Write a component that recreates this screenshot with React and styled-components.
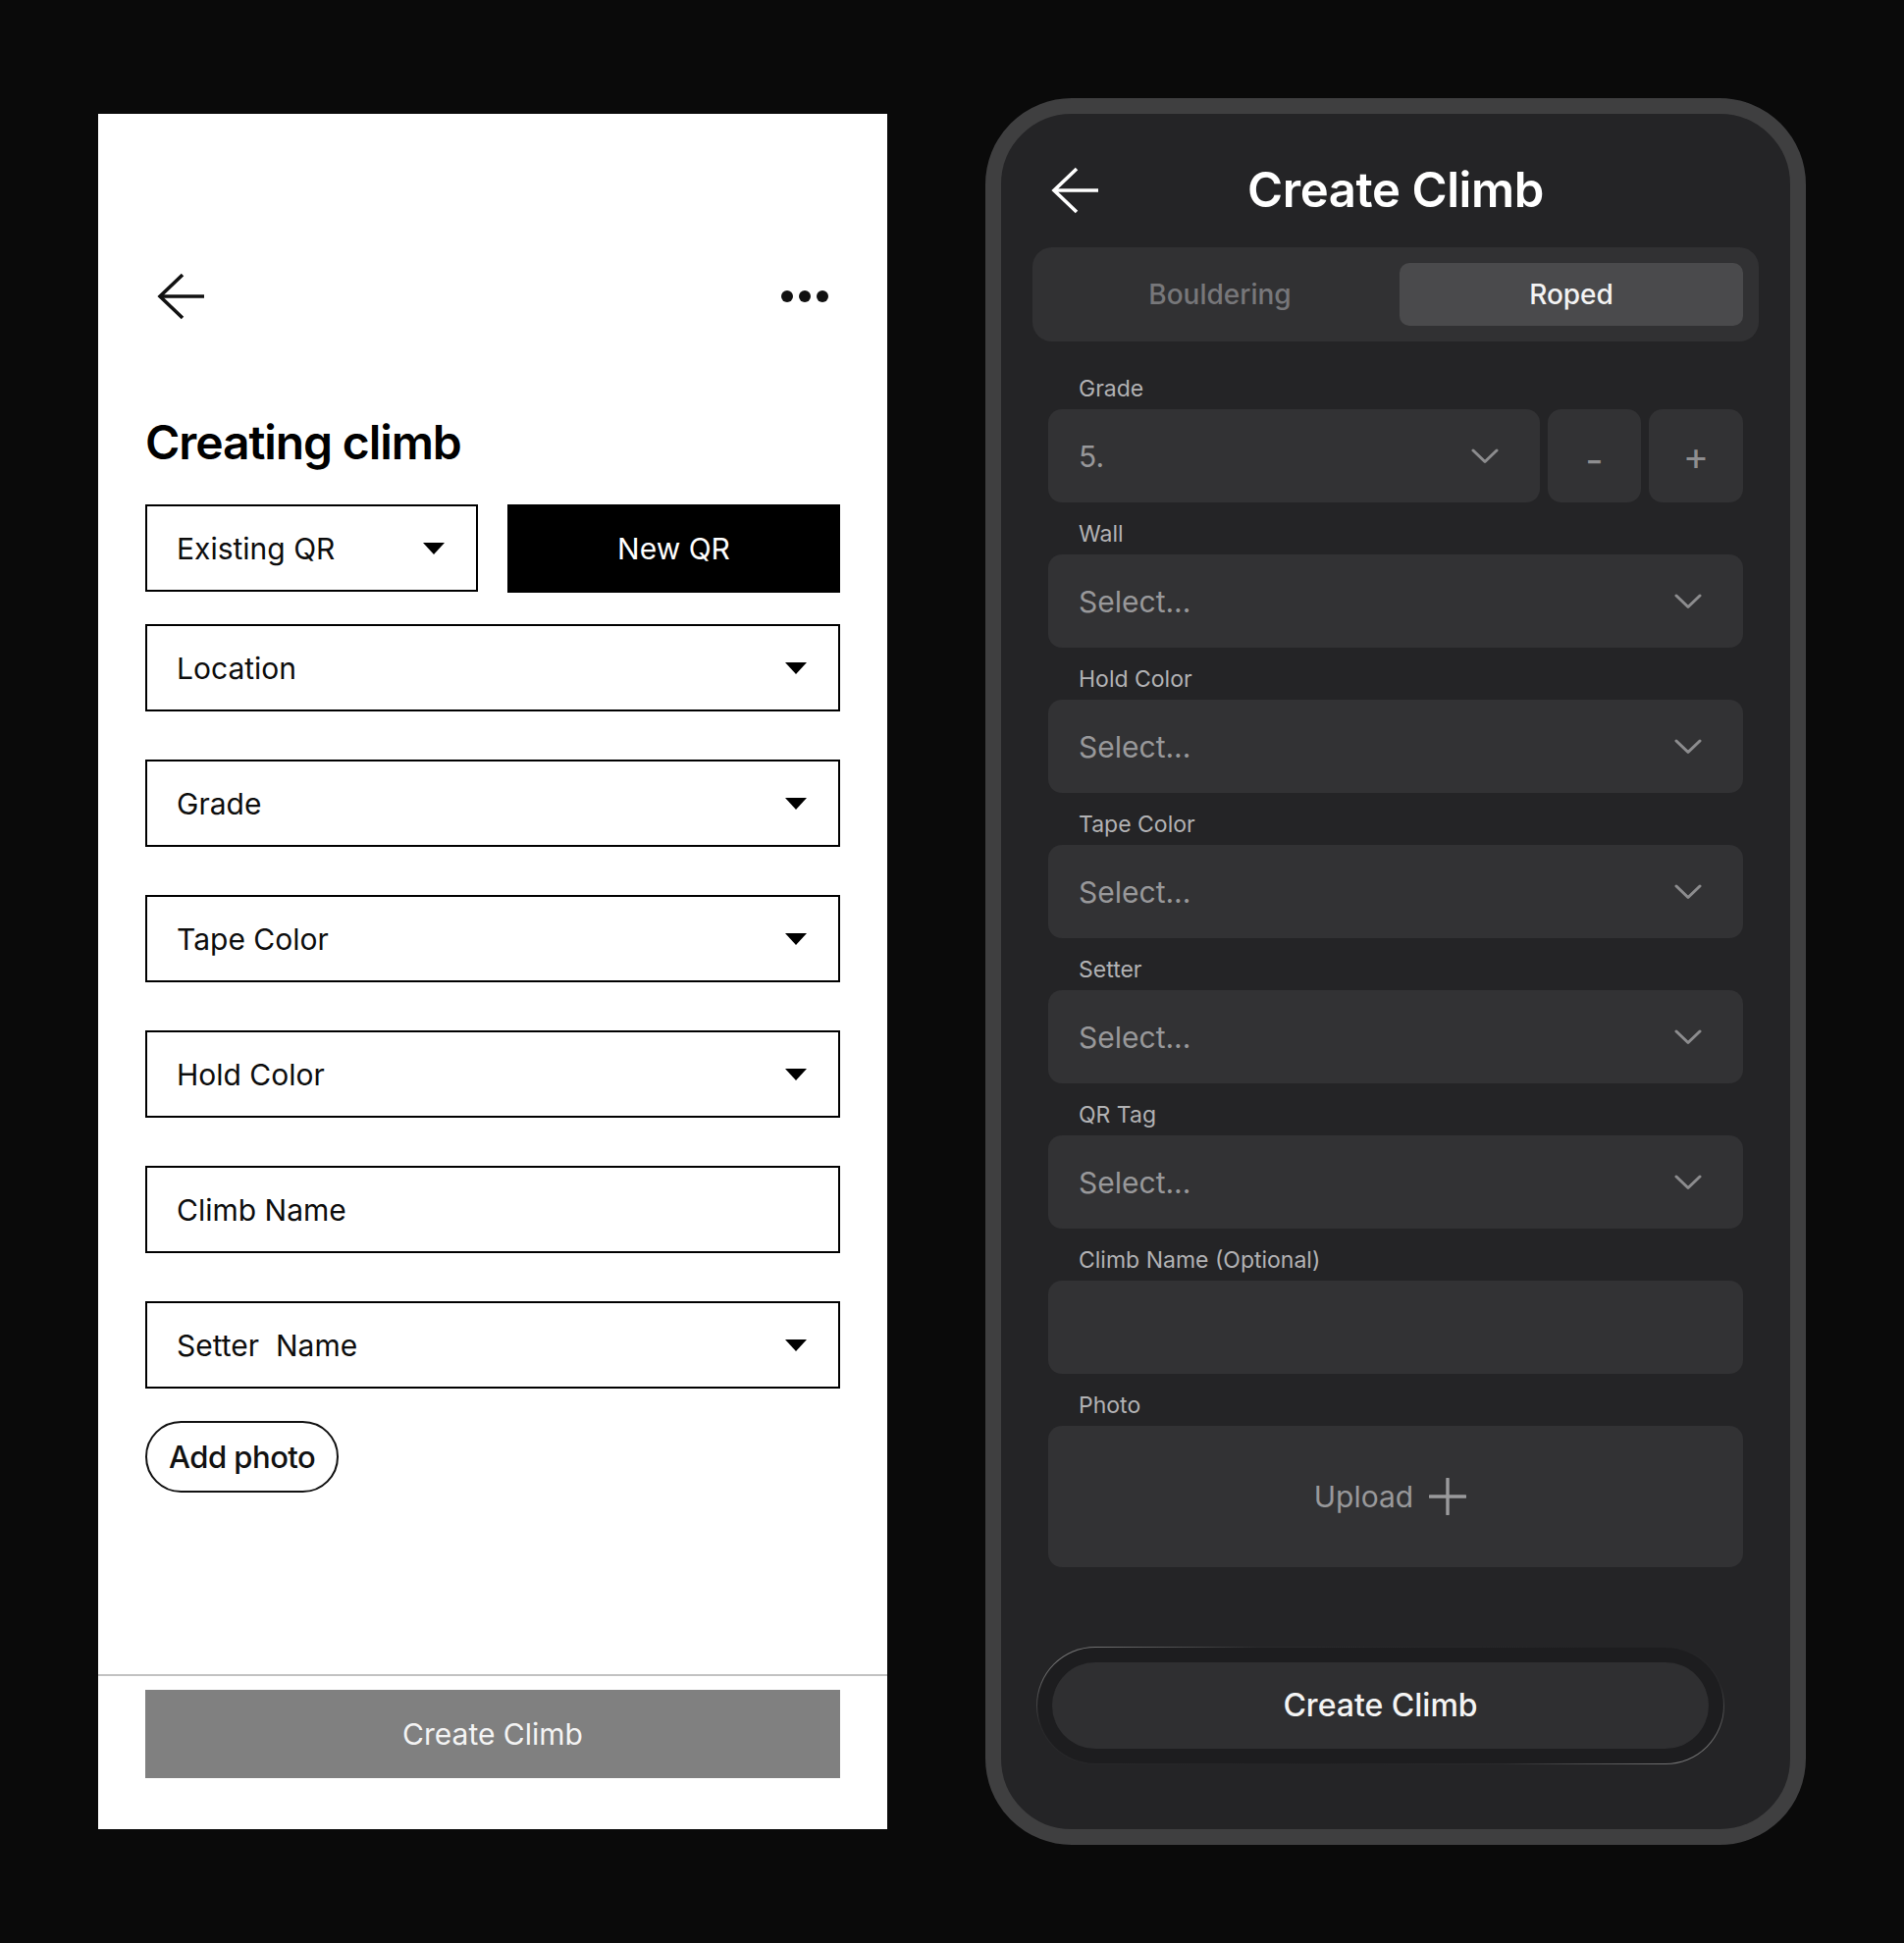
import React from "react";
import styled, { createGlobalStyle } from "styled-components";

const GlobalStyle = createGlobalStyle`
  * { box-sizing: border-box; }
  html, body { margin: 0; padding: 0; }
  body {
    background: #0a0a0a;
    font-family: Inter, "Noto Sans", "Liberation Sans", sans-serif;
  }
`;

const Canvas = styled.div`
  display: flex;
  align-items: flex-start;
  gap: 100px;
  padding: 100px 0 0 100px;
  min-height: 1980px;
  width: 1940px;
`;

/* ---------- Left wireframe ---------- */

const WirePanel = styled.section`
  width: 804px;
  height: 1748px;
  margin-top: 16px;
  background: #ffffff;
  display: flex;
  flex-direction: column;
`;

const WireBody = styled.div`
  padding: 162px 48px 0;
`;

const WireTopBar = styled.div`
  display: flex;
  justify-content: space-between;
  align-items: center;
  height: 48px;
  padding: 0 12px;
`;

const WireTitle = styled.h1`
  margin: 96px 0 0;
  font: 600 48px/58px Inter, sans-serif;
  letter-spacing: -1.1px;
  color: #000;
`;

const QrRow = styled.div`
  display: grid;
  grid-template-columns: 1fr 1fr;
  gap: 30px;
  margin-top: 34px;
`;

const WireSelect = styled.div`
  height: 89px;
  border: 2px solid #000;
  display: flex;
  align-items: center;
  justify-content: space-between;
  padding: 0 32px 0 30px;
  font: 400 30px/1 Inter, sans-serif;
  color: #0d0d0d;
  white-space: pre;
`;

const NewQrButton = styled.div`
  height: 90px;
  background: #000;
  color: #fff;
  display: flex;
  align-items: center;
  justify-content: center;
  font: 400 30px/1 Inter, sans-serif;
`;

const FieldStack = styled.div`
  display: flex;
  flex-direction: column;
  gap: 49px;
  margin-top: 32px;
`;

const AddPhoto = styled.div`
  margin-top: 33px;
  width: fit-content;
  height: 73px;
  padding: 0 22px;
  border: 2px solid #111;
  border-radius: 999px;
  display: flex;
  align-items: center;
  font: 500 31px/1 Inter, sans-serif;
  letter-spacing: -0.5px;
  color: #111;
`;

const WireFooter = styled.div`
  margin-top: auto;
  border-top: 2px solid #c2c2c2;
  padding: 14px 48px 52px;
`;

const GrayButton = styled.div`
  height: 90px;
  background: #808080;
  color: #f4f4f4;
  display: flex;
  align-items: center;
  justify-content: center;
  font: 400 30px/1 Inter, sans-serif;
`;

const Triangle = () => (
  <svg width="22" height="12" viewBox="0 0 22 12" aria-hidden="true">
    <polygon points="0,0 22,0 11,12" fill="#000" />
  </svg>
);

const BackArrow = ({ color }) => (
  <svg width="48" height="48" viewBox="0 0 48 48" fill="none" aria-hidden="true">
    <path d="M26 2 L3 24 L26 46" stroke={color} strokeWidth="3.6" />
    <path d="M3 24 H48" stroke={color} strokeWidth="3.6" />
  </svg>
);

const Dots = () => (
  <svg width="48" height="14" viewBox="0 0 48 14" aria-hidden="true">
    <circle cx="6" cy="7" r="6" fill="#111" />
    <circle cx="24" cy="7" r="6" fill="#111" />
    <circle cx="42" cy="7" r="6" fill="#111" />
  </svg>
);

const wireFields = [
  { label: "Location", drop: true },
  { label: "Grade", drop: true },
  { label: "Tape Color", drop: true },
  { label: "Hold Color", drop: true },
  { label: "Climb Name", drop: false },
  { label: "Setter  Name", drop: true },
];

const Wireframe = () => (
  <WirePanel>
    <WireBody>
      <WireTopBar>
        <BackArrow color="#111" />
        <Dots />
      </WireTopBar>
      <WireTitle>Creating climb</WireTitle>
      <QrRow>
        <WireSelect>
          <span>Existing QR</span>
          <Triangle />
        </WireSelect>
        <NewQrButton>New QR</NewQrButton>
      </QrRow>
      <FieldStack>
        {wireFields.map((f) => (
          <WireSelect key={f.label}>
            <span>{f.label}</span>
            {f.drop && <Triangle />}
          </WireSelect>
        ))}
      </FieldStack>
      <AddPhoto>Add photo</AddPhoto>
    </WireBody>
    <WireFooter>
      <GrayButton>Create Climb</GrayButton>
    </WireFooter>
  </WirePanel>
);

/* ---------- Right phone ---------- */

const PhoneFrame = styled.section`
  width: 836px;
  height: 1780px;
  border: 16px solid #3f3f40;
  border-radius: 88px;
  background: #242426;
  display: flex;
  flex-direction: column;
  overflow: hidden;
`;

const PhoneHeader = styled.header`
  display: grid;
  grid-template-columns: 1fr auto 1fr;
  align-items: center;
  height: 58px;
  margin-top: 49px;
  padding: 0 51px;
`;

const PhoneTitle = styled.h1`
  margin: 0;
  font: 600 49px/58px Inter, sans-serif;
  letter-spacing: -0.4px;
  color: #ffffff;
`;

const Segmented = styled.div`
  margin: 29px 32px 0;
  padding: 16px;
  background: #313133;
  border-radius: 20px;
  display: grid;
  grid-template-columns: 1fr 1fr;
  gap: 8px;
`;

const Tab = styled.div`
  height: 64px;
  border-radius: 10px;
  display: flex;
  align-items: center;
  justify-content: center;
  font: 500 28px/1 Inter, sans-serif;
  background: ${(p) => (p.$active ? "#4a4a4c" : "transparent")};
  color: ${(p) => (p.$active ? "#f3f3f3" : "#77777a")};
`;

const Form = styled.div`
  padding: 0 48px;
  margin-top: 34px;
  display: flex;
  flex-direction: column;
  gap: 18px;
`;

const FieldGroup = styled.div`
  display: flex;
  flex-direction: column;
  gap: 7px;
`;

const FieldLabel = styled.div`
  padding-left: 31px;
  font: 400 23px/28px Inter, sans-serif;
  color: #b2b2b4;
`;

const FieldBox = styled.div`
  height: ${(p) => (p.$tall ? "144px" : "95px")};
  background: #323234;
  border-radius: 14px;
  display: flex;
  align-items: center;
  justify-content: ${(p) => (p.$center ? "center" : "space-between")};
  gap: ${(p) => (p.$center ? "16px" : "0")};
  padding: 0 42px 0 31px;
  font: 400 30px/1 Inter, sans-serif;
  color: #98989a;
`;

const GradeRow = styled.div`
  display: grid;
  grid-template-columns: 1fr 95px 96px;
  gap: 8px;
`;

const StepButton = styled.div`
  height: 95px;
  background: #323234;
  border-radius: 14px;
  display: flex;
  align-items: center;
  justify-content: center;
  font: 400 40px/1 Inter, sans-serif;
  color: #8e8e90;
  padding-top: ${(p) => (p.$minus ? "8px" : "1px")};
`;

const CreateRing = styled.div`
  margin: 81px 0 0 36px;
  width: 701px;
  padding: 15px;
  border-radius: 999px;
  border: 1px solid transparent;
  background:
    linear-gradient(#1d1d1f, #1d1d1f) padding-box,
    linear-gradient(160deg, #8a8a8a 0%, #2a2a2c 22%, #232325 60%, #2a2a2c 78%, #8a8a8a 100%) border-box;
`;

const CreatePill = styled.div`
  height: 88px;
  border-radius: 999px;
  background: #2f2f31;
  display: flex;
  align-items: center;
  justify-content: center;
  font: 500 32px/1 Inter, sans-serif;
  color: #f4f4f4;
`;

const Chevron = () => (
  <svg width="28" height="16" viewBox="0 0 28 16" fill="none" aria-hidden="true">
    <path d="M2 2 L14 13.5 L26 2" stroke="#8c8c8e" strokeWidth="3" strokeLinecap="round" strokeLinejoin="round" />
  </svg>
);

const PlusIcon = () => (
  <svg width="38" height="38" viewBox="0 0 38 38" fill="none" aria-hidden="true">
    <path d="M19 1 V37 M1 19 H37" stroke="#9a9a9c" strokeWidth="3.4" strokeLinecap="round" />
  </svg>
);

const selectFields = ["Wall", "Hold Color", "Tape Color", "Setter", "QR Tag"];

const Phone = () => (
  <PhoneFrame>
    <PhoneHeader>
      <BackArrow color="#ffffff" />
      <PhoneTitle>Create Climb</PhoneTitle>
      <span />
    </PhoneHeader>
    <Segmented>
      <Tab>Bouldering</Tab>
      <Tab $active>Roped</Tab>
    </Segmented>
    <Form>
      <FieldGroup>
        <FieldLabel>Grade</FieldLabel>
        <GradeRow>
          <FieldBox>
            <span>5.</span>
            <Chevron />
          </FieldBox>
          <StepButton $minus>-</StepButton>
          <StepButton>+</StepButton>
        </GradeRow>
      </FieldGroup>
      {selectFields.map((name) => (
        <FieldGroup key={name}>
          <FieldLabel>{name}</FieldLabel>
          <FieldBox>
            <span>Select...</span>
            <Chevron />
          </FieldBox>
        </FieldGroup>
      ))}
      <FieldGroup>
        <FieldLabel>Climb Name (Optional)</FieldLabel>
        <FieldBox />
      </FieldGroup>
      <FieldGroup>
        <FieldLabel>Photo</FieldLabel>
        <FieldBox $tall $center>
          <span>Upload</span>
          <PlusIcon />
        </FieldBox>
      </FieldGroup>
    </Form>
    <CreateRing>
      <CreatePill>Create Climb</CreatePill>
    </CreateRing>
  </PhoneFrame>
);

export default function App() {
  return (
    <>
      <GlobalStyle />
      <Canvas>
        <Wireframe />
        <Phone />
      </Canvas>
    </>
  );
}
